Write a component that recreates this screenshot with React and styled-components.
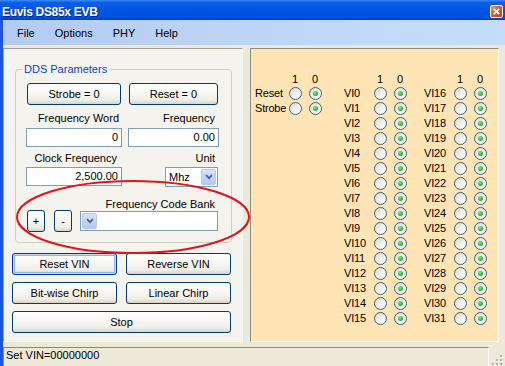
import React from 'react';
import styled, { createGlobalStyle, css } from 'styled-components';

const Global = createGlobalStyle`
  html, body { margin: 0; padding: 0; background: #ece9d8; }
  body { font-family: "Liberation Sans", Arial, sans-serif; font-size: 11px; color: #000; }
  * { box-sizing: border-box; }
`;

const Window = styled.div`
  width: 505px;
  height: 366px;
  overflow: hidden;
  display: flex;
  flex-direction: column;
  background: #ece9d8;
`;

const TitleBar = styled.div`
  height: 20px;
  flex: none;
  display: flex;
  justify-content: space-between;
  padding: 0 2px 0 2px;
  background: linear-gradient(to bottom, #3d8cf6 0%, #0b60e8 12%, #0055e5 45%, #0052e0 85%, #0040c4 100%);
`;

const Title = styled.span`
  color: #fff;
  font-weight: bold;
  font-size: 12px;
  letter-spacing: -0.3px;
  line-height: 14px;
  margin-top: 5px;
  text-shadow: 1px 1px 0 #0a2a8a;
`;

const CloseBtn = styled.span`
  width: 13px;
  height: 13px;
  margin-top: 5px;
  border: 1px solid #fff;
  border-radius: 2px;
  background: linear-gradient(135deg, #f09a7c 0%, #e2592f 45%, #c23e1a 100%);
  display: flex;
  align-items: center;
  justify-content: center;
`;

const Frame = styled.div`
  flex: 1;
  display: flex;
  flex-direction: column;
  border-left: 3px solid #1d55dc;
  min-height: 0;
`;

const MenuBar = styled.div`
  height: 25px;
  flex: none;
  display: flex;
  align-items: center;
  padding-left: 4px;
  background: linear-gradient(to right, #b3cbf0 0%, #bed5f6 50%, #c6ddf9 100%);
`;

const MenuItem = styled.span`
  padding: 0 10px;
  font-size: 11px;
`;

const Body = styled.div`
  position: relative;
  height: 298px;
  flex: none;
  display: flex;
  align-items: flex-start;
  gap: 7px;
  padding-top: 3px;
`;

const LeftPanel = styled.div`
  width: 240px;
  height: 294px;
  border: 1px solid;
  border-color: #a09e92 #ffffff #ffffff #a09e92;
  background: #f4f3ee;
  padding: 0 8px;
  display: flex;
  flex-direction: column;
`;

const GroupBox = styled.div`
  position: relative;
  margin: 20px 0 0 3px;
  width: 217px;
  height: 174px;
  border: 1px solid #d0d0bf;
  border-radius: 4px;
  padding: 13px 12px 0 10px;
`;

const Legend = styled.span`
  position: absolute;
  top: -8px;
  left: 6px;
  padding: 0 2px;
  line-height: 14px;
  background: #f4f3ee;
  color: #0046d5;
`;

const TwoCol = styled.div`
  display: grid;
  grid-template-columns: 96px 91px;
  column-gap: 6px;
  margin-top: ${p => p.$mt || 0}px;
`;

const FieldLabel = styled.div`
  height: 14px;
  line-height: 14px;
  text-align: right;
  padding-right: ${p => p.$pr ?? 3}px;
  margin-top: ${p => p.$mt || 0}px;
  white-space: nowrap;
`;

const XpButton = styled.button`
  font-family: "Liberation Sans", Arial, sans-serif;
  font-size: 11px;
  color: #000;
  height: ${p => p.$h || 22}px;
  margin: 0;
  padding: 0;
  border: 1px solid #003c74;
  border-radius: 3px;
  background: linear-gradient(to bottom, #ffffff 0%, #f8f7f3 45%, #efede5 80%, #d8d3c7 100%);
  ${p => p.$focus && css`
    box-shadow: inset 0 0 0 1px #cadcf8, inset 0 0 0 2px #8fb1ec;
  `}
`;

const InsetBtn = styled(XpButton)`
  margin: 0 1px;
`;

const TextInput = styled.div`
  height: 19px;
  border: 1px solid #7f9db9;
  background: #fff;
  text-align: right;
  padding-right: 3px;
  line-height: 17px;
`;

const SelectBox = styled.div`
  justify-self: end;
  width: 53px;
  height: 20px;
  margin-right: 1px;
  border: 1px solid #7f9db9;
  background: #fff;
  display: flex;
  align-items: center;
  justify-content: space-between;
  padding: 0 1px 0 3px;
`;

const DropBtn = styled.span`
  width: 15px;
  height: 16px;
  border: 1px solid #b5c9f4;
  border-radius: 2px;
  background: linear-gradient(to bottom, #d6e2fd 0%, #c3d4fb 50%, #b2c7f6 100%);
  display: flex;
  align-items: center;
  justify-content: center;
`;

const BankRow = styled.div`
  display: flex;
  align-items: center;
  height: 22px;
  margin-top: -1px;
`;

const SmallBtn = styled(XpButton)`
  width: 18px;
  margin-left: ${p => p.$ml}px;
`;

const Combo = styled.div`
  width: 138px;
  height: 20px;
  margin-left: 8px;
  border: 1px solid #7f9db9;
  background: #fff;
  display: flex;
  align-items: center;
  padding-left: 1px;
`;

const ButtonGrid = styled.div`
  display: grid;
  grid-template-columns: 105px 105px;
  grid-auto-rows: 22px;
  column-gap: 9px;
  row-gap: 7px;
  margin-top: 10px;
`;

const WideBtn = styled(XpButton)`
  grid-column: 1 / span 2;
`;

const RightPanel = styled.div`
  width: 249px;
  height: 294px;
  border: 1px solid;
  border-color: #8e8c80 #ffffff #ffffff #8e8c80;
  background: #ffe4b5;
  padding: 23px 0 0 4px;
  display: flex;
  align-items: flex-start;
`;

const BitGroup = styled.div`
  display: grid;
  grid-template-columns: ${p => p.$lw}px 20px 20px;
  grid-template-rows: 14px;
  grid-auto-rows: 15px;
  align-items: center;
  margin-right: ${p => p.$mr || 0}px;
`;

const HeadCell = styled.span`
  text-align: center;
  line-height: 14px;
`;

const BitLabel = styled.span`
  line-height: 15px;
  white-space: nowrap;
  letter-spacing: -0.2px;
`;

const Radio = styled.span`
  justify-self: center;
  width: 13px;
  height: 13px;
  border-radius: 50%;
  border: 1px solid #41607f;
  background: linear-gradient(135deg, #d6d6ce 0%, #eeeee9 45%, #ffffff 100%);
  display: flex;
  align-items: center;
  justify-content: center;
  &::after {
    content: '';
    display: ${p => (p.$checked ? 'block' : 'none')};
    width: 5px;
    height: 5px;
    border-radius: 50%;
    background: radial-gradient(circle at 40% 35%, #8cf08a 0%, #3cc03a 45%, #1d951d 100%);
  }
`;

const Overlay = styled.svg`
  position: absolute;
  left: 0;
  top: 0;
  pointer-events: none;
  overflow: visible;
`;

const StatusBar = styled.div`
  flex: 1;
  display: flex;
  align-items: flex-start;
  padding-top: 4px;
  min-height: 0;
`;

const StatusBox = styled.div`
  width: 486px;
  height: 40px;
  border: 1px solid;
  border-color: #8b897c #ffffff #ffffff #8b897c;
  padding: 0 0 0 2px;
  line-height: 14px;
  white-space: nowrap;
`;

const StatusLine = styled.div`
  height: ${p => p.$h}px;
  line-height: 14px;
`;

const Grip = styled.svg`
  align-self: flex-end;
  margin-left: 1px;
  flex: none;
`;

const Chevron = () => (
  <svg width="8" height="6" viewBox="0 0 8 6">
    <path d="M1 1.2 L4 4.2 L7 1.2" fill="none" stroke="#4d6185" strokeWidth="1.8" />
  </svg>
);

const BitColumn = ({ labels, lw, mr }) => (
  <BitGroup $lw={lw} $mr={mr}>
    <span />
    <HeadCell>1</HeadCell>
    <HeadCell>0</HeadCell>
    {labels.map(l => (
      <React.Fragment key={l}>
        <BitLabel>{l}</BitLabel>
        <Radio />
        <Radio $checked />
      </React.Fragment>
    ))}
  </BitGroup>
);

const vi = (from, to) => Array.from({ length: to - from + 1 }, (_, i) => `VI${from + i}`);

export default function App() {
  return (
    <>
      <Global />
      <Window>
        <TitleBar>
          <Title>Euvis DS85x EVB</Title>
          <CloseBtn>
            <svg width="7" height="7" viewBox="0 0 7 7">
              <path d="M0.8 0.8 L6.2 6.2 M6.2 0.8 L0.8 6.2" stroke="#fff" strokeWidth="1.8" />
            </svg>
          </CloseBtn>
        </TitleBar>
        <Frame>
          <MenuBar>
            <MenuItem>File</MenuItem>
            <MenuItem>Options</MenuItem>
            <MenuItem>PHY</MenuItem>
            <MenuItem>Help</MenuItem>
          </MenuBar>
          <Body>
            <LeftPanel>
              <GroupBox>
                <Legend>DDS Parameters</Legend>
                <TwoCol>
                  <InsetBtn>Strobe = 0</InsetBtn>
                  <InsetBtn>Reset = 0</InsetBtn>
                </TwoCol>
                <TwoCol $mt={6}>
                  <FieldLabel>Frequency Word</FieldLabel>
                  <FieldLabel $pr={4}>Frequency</FieldLabel>
                </TwoCol>
                <TwoCol $mt={3}>
                  <TextInput>0</TextInput>
                  <TextInput>0.00</TextInput>
                </TwoCol>
                <TwoCol $mt={4}>
                  <FieldLabel $pr={5}>Clock Frequency</FieldLabel>
                  <FieldLabel $pr={4}>Unit</FieldLabel>
                </TwoCol>
                <TwoCol $mt={2}>
                  <TextInput>2,500.00</TextInput>
                  <SelectBox>
                    <span>Mhz</span>
                    <DropBtn><Chevron /></DropBtn>
                  </SelectBox>
                </TwoCol>
                <FieldLabel $pr={4} $mt={10}>Frequency Code Bank</FieldLabel>
                <BankRow>
                  <SmallBtn $ml={1}>+</SmallBtn>
                  <SmallBtn $ml={9}>-</SmallBtn>
                  <Combo>
                    <DropBtn><Chevron /></DropBtn>
                  </Combo>
                </BankRow>
              </GroupBox>
              <ButtonGrid>
                <XpButton $focus>Reset VIN</XpButton>
                <XpButton>Reverse VIN</XpButton>
                <XpButton>Bit-wise Chirp</XpButton>
                <XpButton>Linear Chirp</XpButton>
                <WideBtn>Stop</WideBtn>
              </ButtonGrid>
            </LeftPanel>
            <RightPanel>
              <BitColumn labels={['Reset', 'Strobe']} lw={30} mr={19} />
              <BitColumn labels={vi(0, 15)} lw={26} mr={14} />
              <BitColumn labels={vi(16, 31)} lw={26} />
            </RightPanel>
            <Overlay width="260" height="260">
              <ellipse cx="130" cy="172" rx="116" ry="36" fill="none" stroke="#e3141b" strokeWidth="2" />
            </Overlay>
          </Body>
          <StatusBar>
            <StatusBox>
              <StatusLine $h={15}>Set VIN=00000000</StatusLine>
              <StatusLine $h={14}>Clock set</StatusLine>
            </StatusBox>
            <Grip width="13" height="13" viewBox="0 0 13 13">
              {[[10, 2], [6, 6], [10, 6], [2, 10], [6, 10], [10, 10]].map(([x, y]) => (
                <React.Fragment key={`${x}-${y}`}>
                  <rect x={x + 1} y={y + 1} width="2" height="2" fill="#ffffff" />
                  <rect x={x} y={y} width="2" height="2" fill="#b5b2a4" />
                </React.Fragment>
              ))}
            </Grip>
          </StatusBar>
        </Frame>
      </Window>
    </>
  );
}
